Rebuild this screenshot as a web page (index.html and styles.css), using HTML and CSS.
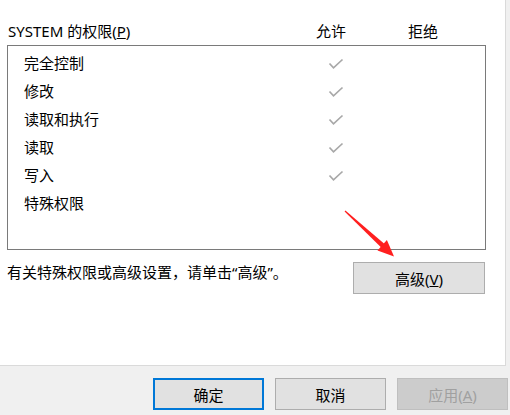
FILE: index.html
```html
<!DOCTYPE html>
<html lang="zh-CN">
<head>
    <meta charset="UTF-8">
    <title>SYSTEM 的权限</title>
    <link rel="stylesheet" href="styles.css">
</head>
<body>
    <div class="panel">
        <div class="perm-header">
            <span class="perm-title">SYSTEM 的权限(<u>P</u>)</span>
            <span class="col-allow">允许</span>
            <span class="col-deny">拒绝</span>
        </div>

        <div class="perm-list" id="permList">
            <!-- 权限行由脚本生成 -->
        </div>

        <div class="advanced-row">
            <span class="hint">有关特殊权限或高级设置，请单击“高级”。</span>
            <button class="btn btn-advanced">高级(<u>V</u>)</button>
        </div>

        <svg class="arrow" width="60" height="56" viewBox="0 0 60 56">
            <polygon points="5.4,5.6 46.9,41.1 43.5,44.7 4.6,6.4" fill="#ff1f1f"/>
            <polygon points="54,51.5 37.5,45.4 46.9,35" fill="#ff1f1f"/>
        </svg>
    </div>

    <div class="footer">
        <button class="btn btn-default">确定</button>
        <button class="btn">取消</button>
        <button class="btn btn-disabled">应用(<u>A</u>)</button>
    </div>

    <script>
        const perms = [
            { name: '完全控制', allow: true },
            { name: '修改', allow: true },
            { name: '读取和执行', allow: true },
            { name: '读取', allow: true },
            { name: '写入', allow: true },
            { name: '特殊权限', allow: false }
        ];

        const check = '<svg width="16" height="12" viewBox="0 0 16 12"><polyline points="1.5,5.5 5.5,9.8 14.5,1.5" fill="none" stroke="#a8a8a8" stroke-width="1.7"/></svg>';

        const list = document.getElementById('permList');
        perms.forEach(p => {
            const row = document.createElement('div');
            row.classList.add('perm-row');
            row.innerHTML = `
                <span class="perm-name">${p.name}</span>
                <span class="perm-check">${p.allow ? check : ''}</span>
            `;
            list.appendChild(row);
        });
    </script>
</body>
</html>
```

FILE: styles.css
```css
body {
    margin: 0;
    background-color: #f0f0f0;
    font-family: "Segoe UI", "Noto Sans", "Noto Sans CJK SC", sans-serif;
    font-size: 15px;
    color: #000;
    width: 510px;
    height: 415px;
    overflow: hidden;
}
.panel {
    position: relative;
    box-sizing: border-box;
    width: 506px;
    height: 366px;
    background-color: #fff;
    border-right: 1px solid #dadada;
    border-bottom: 1px solid #dadada;
    padding: 21px 0 0 7px;
}
.perm-header {
    display: grid;
    grid-template-columns: 308px 92px auto;
    height: 20px;
    line-height: 20px;
    padding-left: 1px;
}
.perm-list {
    box-sizing: border-box;
    width: 479px;
    height: 205px;
    margin-top: 4px;
    border: 1px solid #7a7a7a;
    padding: 2px 0 0 16px;
}
.perm-row {
    display: grid;
    grid-template-columns: 304px auto;
    align-items: center;
    height: 28px;
}
.perm-check {
    display: flex;
    align-items: center;
    padding-top: 4px;
}
.advanced-row {
    display: flex;
    justify-content: space-between;
    align-items: center;
    width: 478px;
    margin-top: 12px;
}
.hint {
    margin-top: -14px;
}
.btn {
    box-sizing: border-box;
    width: 111px;
    height: 32px;
    background-color: #e1e1e1;
    border: 1px solid #adadad;
    font-family: inherit;
    font-size: 15px;
    color: #000;
    padding: 0;
}
.btn-advanced {
    width: 132px;
}
.btn-default {
    border: 2px solid #0078d7;
}
.btn-disabled {
    background-color: #cccccc;
    border-color: #bfbfbf;
    color: #a0a0a0;
}
.footer {
    display: flex;
    justify-content: flex-end;
    gap: 11px;
    padding: 12px 2px 0 0;
}
.arrow {
    position: absolute;
    left: 340px;
    top: 205px;
}
```
